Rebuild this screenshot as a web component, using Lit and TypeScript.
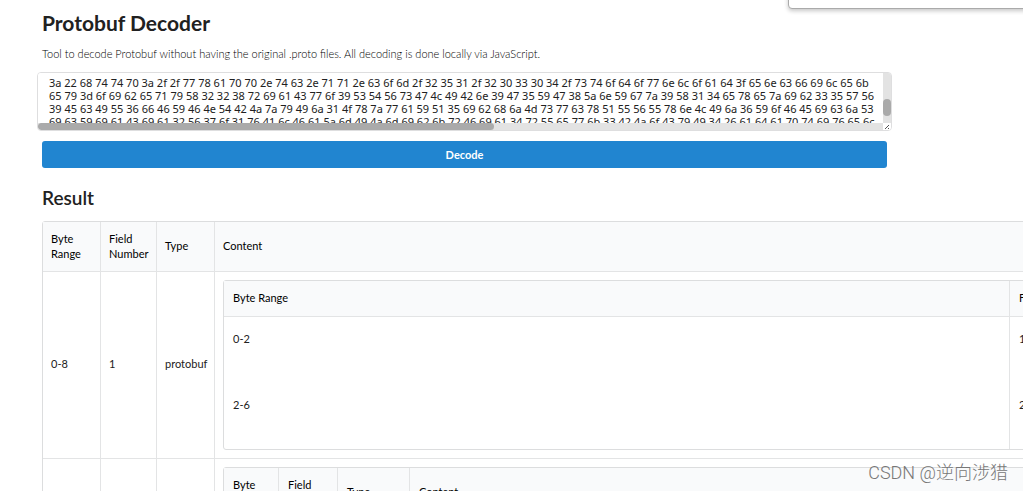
import { LitElement, html, css } from "lit";
import { customElement, state } from "lit/decorators.js";

const HEX = [
  "3a 22 68 74 74 70 3a 2f 2f 77 78 61 70 70 2e 74 63 2e 71 71 2e 63 6f 6d 2f 32 35 31 2f 32 30 33 30 34 2f 73 74 6f 64 6f 77 6e 6c 6f 61 64 3f 65 6e 63 66 69 6c 65 6b",
  "65 79 3d 6f 69 62 65 71 79 58 32 32 38 72 69 61 43 77 6f 39 53 54 56 73 47 4c 49 42 6e 39 47 35 59 47 38 5a 6e 59 67 7a 39 58 31 34 65 78 65 7a 69 62 33 35 57 56",
  "39 45 63 49 55 36 66 46 59 46 4e 54 42 4a 7a 79 49 6a 31 4f 78 7a 77 61 59 51 35 69 62 68 6a 4d 73 77 63 78 51 55 56 55 78 6e 4c 49 6a 36 59 6f 46 45 69 63 6a 53",
  "69 63 59 69 61 43 69 61 32 56 37 6f 31 76 41 6c 46 61 5a 6d 49 4a 6d 69 62 6b 72 46 69 61 34 72 55 65 77 6b 33 42 4a 6f 43 79 49 34 26 61 64 61 70 74 69 76 65 6c",
].join("\n");

@customElement("app-root")
export class AppRoot extends LitElement {
  @state() private source = HEX;

  static styles = css`
    :host {
      display: block;
      position: relative;
      height: 100vh;
      overflow: hidden;
      background: #fff;
      color: #212121;
      font-family: Lato, sans-serif;
      font-size: 11px;
      line-height: 15px;
    }
    .page {
      max-width: 845px;
      margin: 0 42px;
      padding-top: 9px;
    }
    h1, h2, p { margin: 0; }
    h1 { font-size: 21px; line-height: 27px; font-weight: 700; }
    h2 { font-size: 19px; line-height: 24px; font-weight: 600; margin: 18px 0 11px; }
    p { margin: 10px 0 11px; font-weight: 300; color: #000; }
    .editor {
      display: grid;
      grid-template: 50px 7px / 1fr 8px;
      margin: 0 -5px 10px;
      border: 1px solid #dededf;
      border-radius: 4px;
      overflow: hidden;
    }
    .text {
      box-sizing: border-box;
      width: 100%;
      height: 100%;
      border: 0;
      margin: 0;
      padding: 3px 11px 0;
      resize: none;
      outline: 0;
      overflow: hidden;
      white-space: pre;
      background: #fff;
      color: #212121;
      font-family: "Noto Sans", sans-serif;
      font-size: 11px;
      line-height: 13px;
    }
    .track { background: #e3e3e3; }
    .thumb { background: #aaa; border-radius: 4px; }
    .vertical { padding-top: 26px; }
    .vertical .thumb { height: 17px; }
    .horizontal .thumb { width: 54%; height: 100%; }
    .grip { display: block; background: #fff; }
    .decode {
      display: block;
      width: 100%;
      height: 27px;
      border: 0;
      border-radius: 3px;
      background: #2185d0;
      color: #fff;
      font: 700 11px/15px Lato, sans-serif;
      cursor: pointer;
    }
    table {
      border-collapse: separate;
      border-spacing: 0;
      border: 1px solid #dcddde;
      border-radius: 3px;
      background: #fff;
      table-layout: fixed;
    }
    th, td {
      box-sizing: border-box;
      padding: 8px;
      text-align: left;
      vertical-align: middle;
      font-weight: 400;
      border-left: 1px solid #e3e4e5;
    }
    th:first-child, td:first-child { border-left: 0; }
    th {
      background: #f9fafb;
      color: #000;
      padding: 7px 8px 9px;
      border-bottom: 1px solid #e3e4e5;
    }
    td { color: #212121; }
    .outer { width: 1240px; }
    .outer > thead > tr > th { height: 50px; }
    .outer > tbody > tr > td { border-bottom: 1px solid #e3e4e5; }
    .outer > tbody > tr > td.value { padding-bottom: 12px; }
    th.range { width: 57px; }
    th.number { width: 56px; }
    th.type { width: 58px; }
    .inner { width: 1000px; }
    .inner th, .inner td { padding: 0 9px 2px; }
    .inner .wide { width: 785px; }
    .inner .head { height: 36px; }
    .inner .short { height: 44px; }
    .inner .tall { height: 88px; }
    .fields th { height: 50px; }
    .fields .range { width: 54px; }
    .fields .number { width: 59px; }
    .fields .type { width: 72px; }
    .popup {
      position: absolute;
      top: -10px;
      left: calc(100% - 235px);
      right: -10px;
      height: 17px;
      border: 1px solid #aaa;
      border-radius: 4px;
      background: #fff;
      box-shadow: 0 2px 4px rgba(0, 0, 0, 0.22);
    }
    .mark {
      position: absolute;
      right: 15px;
      bottom: 5px;
      font: 300 18px/26px Roboto, "Noto Sans CJK SC", sans-serif;
      color: #777;
    }
  `;

  private onInput(e: Event) {
    this.source = (e.target as HTMLTextAreaElement).value;
  }

  render() {
    return html`
      <main class="page">
        <h1>Protobuf Decoder</h1>
        <p>Tool to decode Protobuf without having the original .proto files. All decoding is done locally via JavaScript.</p>
        <div class="editor">
          <textarea class="text" aria-label="Protobuf bytes" wrap="off" spellcheck="false"
            .value=${this.source} @input=${this.onInput}></textarea>
          <div class="track vertical"><div class="thumb"></div></div>
          <div class="track horizontal"><div class="thumb"></div></div>
          <svg class="grip" width="8" height="7" viewBox="0 0 8 7">
            <path d="M2 6L6 2M5 6L6 5" stroke="#555" stroke-width="1" fill="none" />
          </svg>
        </div>
        <button class="decode" type="button">Decode</button>
        <h2>Result</h2>
        <table class="outer">
          <thead>
            <tr>
              <th class="range">Byte Range</th>
              <th class="number">Field Number</th>
              <th class="type">Type</th>
              <th>Content</th>
            </tr>
          </thead>
          <tbody>
            <tr>
              <td class="value">0-8</td>
              <td class="value">1</td>
              <td class="value">protobuf</td>
              <td>
                <table class="inner">
                  <thead>
                    <tr><th class="wide head">Byte Range</th><th>Field Number</th></tr>
                  </thead>
                  <tbody>
                    <tr><td class="short">0-2</td><td>1</td></tr>
                    <tr><td class="tall">2-6</td><td>2</td></tr>
                  </tbody>
                </table>
              </td>
            </tr>
            <tr>
              <td></td>
              <td></td>
              <td></td>
              <td>
                <table class="inner fields">
                  <thead>
                    <tr>
                      <th class="range">Byte Range</th>
                      <th class="number">Field Number</th>
                      <th class="type">Type</th>
                      <th>Content</th>
                    </tr>
                  </thead>
                </table>
              </td>
            </tr>
          </tbody>
        </table>
      </main>
      <div class="popup"></div>
      <div class="mark">CSDN @逆向涉猎</div>
    `;
  }
}
